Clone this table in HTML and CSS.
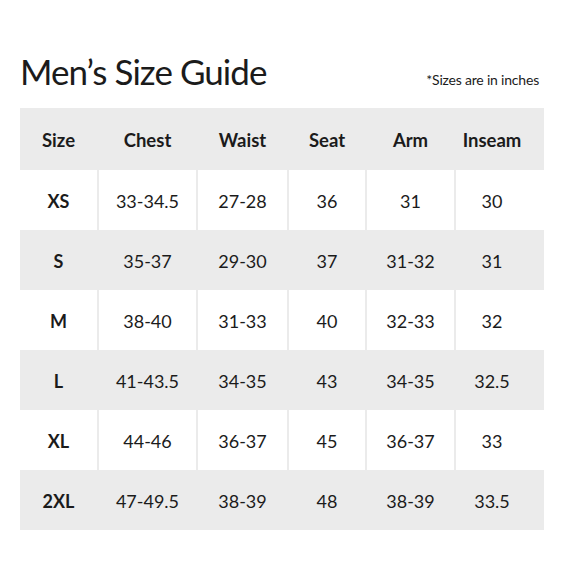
FILE: index.html
```html
<!DOCTYPE html>
<html>
<head>
<meta charset="utf-8">
<link rel="stylesheet" href="styles.css">
</head>
<body>
<div class="page">
  <div class="top">
    <h1 class="title">Men’s Size Guide</h1>
    <div class="note">*Sizes are in inches</div>
  </div>
  <div class="table">
    <div class="row head"><div>Size</div><div>Chest</div><div>Waist</div><div>Seat</div><div>Arm</div><div>Inseam</div></div>
    <div class="row white"><div class="size">XS</div><div>33-34.5</div><div>27-28</div><div>36</div><div>31</div><div>30</div></div>
    <div class="row gray"><div class="size">S</div><div>35-37</div><div>29-30</div><div>37</div><div>31-32</div><div>31</div></div>
    <div class="row white"><div class="size">M</div><div>38-40</div><div>31-33</div><div>40</div><div>32-33</div><div>32</div></div>
    <div class="row gray"><div class="size">L</div><div>41-43.5</div><div>34-35</div><div>43</div><div>34-35</div><div>32.5</div></div>
    <div class="row white"><div class="size">XL</div><div>44-46</div><div>36-37</div><div>45</div><div>36-37</div><div>33</div></div>
    <div class="row gray"><div class="size">2XL</div><div>47-49.5</div><div>38-39</div><div>48</div><div>38-39</div><div>33.5</div></div>
  </div>
</div>
</body>
</html>
```
FILE: styles.css
```css
html, body {
  margin: 0;
  padding: 0;
  background: #ffffff;
}
.page {
  width: 561px;
  height: 581px;
  font-family: "Lato", "Open Sans", sans-serif;
  color: #1b1b1b;
}
.top {
  display: flex;
  justify-content: space-between;
  align-items: baseline;
  padding: 50px 22px 0 20px;
  height: 58px;
}
.title {
  margin: 0;
  font-size: 35px;
  font-weight: 400;
  letter-spacing: -0.95px;
  line-height: 42px;
}
.note {
  font-size: 14px;
  letter-spacing: -0.2px;
}
.table {
  margin-left: 20px;
  width: 524px;
  background: #ebebeb;
}
.row {
  display: grid;
  grid-template-columns: 77px 97px 89px 76px 87px 88px;
  column-gap: 2px;
  height: 60px;
  font-size: 18px;
}
.row > div {
  display: flex;
  align-items: center;
  justify-content: center;
  padding-top: 2px;
}
.row > div:last-child {
  padding-right: 16px;
}
.row.head {
  height: 62px;
  font-weight: 700;
  font-size: 18.5px;
}
.row.white > div {
  background: #ffffff;
}
.size {
  font-weight: 700;
}
```
